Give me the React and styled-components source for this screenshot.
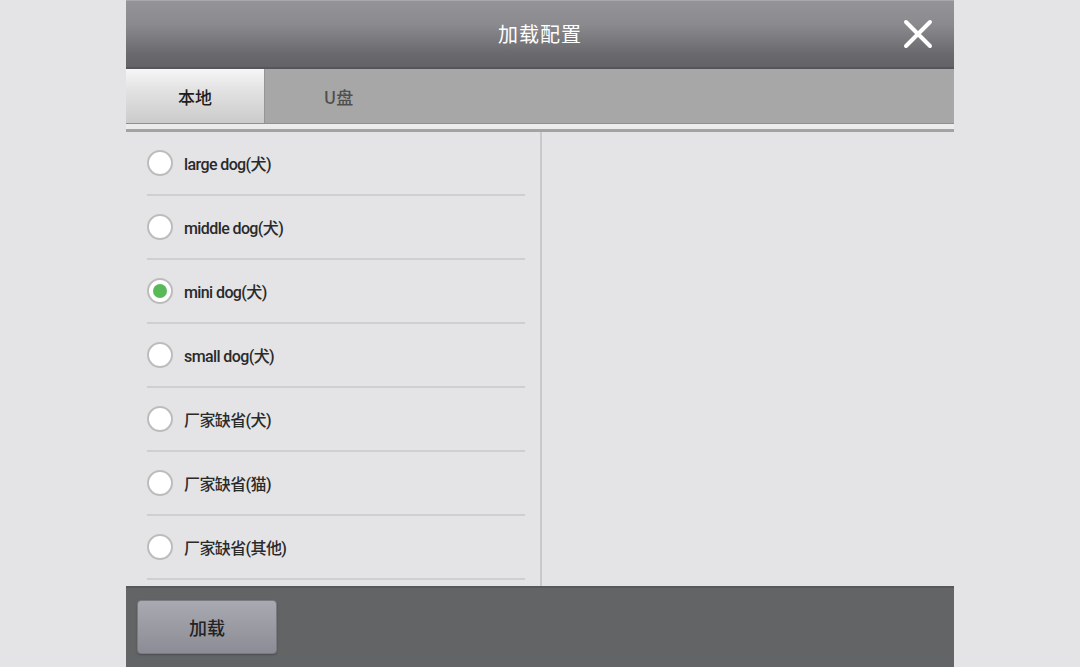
import React, { useState } from 'react';
import styled, { createGlobalStyle } from 'styled-components';

const GlobalStyle = createGlobalStyle`
  body {
    margin: 0;
    background: #e4e4e6;
    font-family: Roboto, "Noto Sans CJK SC", sans-serif;
  }
`;

const items = [
  'large dog(犬)',
  'middle dog(犬)',
  'mini dog(犬)',
  'small dog(犬)',
  '厂家缺省(犬)',
  '厂家缺省(猫)',
  '厂家缺省(其他)',
];

const App = () => {
  const [tab, setTab] = useState(0);
  const [selected, setSelected] = useState(2);

  return (
    <>
      <GlobalStyle />
      <Page>
        <Dialog>
          <Header>
            <span />
            <Title>加载配置</Title>
            <CloseBtn>
              <svg width="30" height="30" viewBox="0 0 30 30">
                <path
                  d="M3 3 L27 27 M27 3 L3 27"
                  stroke="#fff"
                  strokeWidth="4"
                  strokeLinecap="round"
                />
              </svg>
            </CloseBtn>
          </Header>
          <TabBar>
            {['本地', 'U盘'].map((t, idx) => (
              <Tab key={t} active={tab === idx} onClick={() => setTab(idx)}>
                {t}
              </Tab>
            ))}
          </TabBar>
          <TabRule />
          <Body>
            <List>
              {items.map((name, idx) => (
                <Row key={name} onClick={() => setSelected(idx)}>
                  <Radio checked={selected === idx} />
                  <Label>{name}</Label>
                </Row>
              ))}
            </List>
            <Preview />
          </Body>
          <Footer>
            <LoadBtn>加载</LoadBtn>
          </Footer>
        </Dialog>
      </Page>
    </>
  );
};

const Page = styled.div`
  display: flex;
  justify-content: center;
  height: 667px;
  overflow: hidden;
`;

const Dialog = styled.div`
  width: 828px;
  height: 667px;
  display: flex;
  flex-direction: column;
  background: #e4e4e6;
`;

const Header = styled.div`
  height: 69px;
  flex-shrink: 0;
  box-sizing: border-box;
  display: grid;
  grid-template-columns: 1fr auto 1fr;
  align-items: center;
  background: linear-gradient(#939398, #8a8a8f 35%, #6a6a6e 80%, #636367);
  border-top: 1px solid #a9a9ad;
  border-bottom: 2px solid #56565a;
`;

const Title = styled.div`
  color: #fff;
  font-size: 20px;
  letter-spacing: 1px;
  font-family: "Noto Sans CJK SC", sans-serif;
  padding-bottom: 2px;
`;

const CloseBtn = styled.div`
  justify-self: end;
  margin-right: 21px;
  display: flex;
  align-items: center;
  padding-bottom: 1px;
`;

const TabBar = styled.div`
  height: 54px;
  flex-shrink: 0;
  display: flex;
  background: #a7a7a7;
  border-bottom: 1px solid #8f8f8f;
`;

const Tab = styled.div`
  width: 139px;
  display: flex;
  align-items: center;
  justify-content: center;
  padding-left: ${(p) => (p.active ? '0' : '8px')};
  font-size: 17px;
  font-weight: 500;
  font-family: "Noto Sans CJK SC", sans-serif;
  color: ${(p) => (p.active ? '#1e1e1e' : '#505050')};
  background: ${(p) =>
    p.active ? 'linear-gradient(#f6f6f6, #e2e2e2 40%, #cbcbcb)' : 'transparent'};
  border-right: ${(p) => (p.active ? '1px solid #959595' : 'none')};
  box-sizing: border-box;
  cursor: pointer;
`;

const TabRule = styled.div`
  height: 5px;
  flex-shrink: 0;
  background: #ececec;
  border-bottom: 3px solid #a3a3a3;
`;

const Body = styled.div`
  flex: 1;
  display: flex;
  min-height: 0;
`;

const List = styled.div`
  width: 416px;
  padding: 0 15px 0 21px;
  box-sizing: border-box;
  border-right: 2px solid #c9c9cd;
`;

const Row = styled.div`
  height: 62px;
  display: flex;
  align-items: center;
  gap: 11px;
  border-bottom: 2px solid #cfcfd3;
  cursor: pointer;
`;

const Radio = styled.div`
  width: 26px;
  height: 26px;
  border-radius: 50%;
  box-sizing: border-box;
  border: 2px solid #bcbcbc;
  background: #fff;
  display: flex;
  align-items: center;
  justify-content: center;

  &::after {
    content: '';
    width: 14px;
    height: 14px;
    border-radius: 50%;
    background: #57b957;
    display: ${(p) => (p.checked ? 'block' : 'none')};
  }
`;

const Label = styled.span`
  font-size: 16px;
  font-weight: 500;
  color: #2a2a2a;
  letter-spacing: -0.6px;
`;

const Preview = styled.div`
  flex: 1;
`;

const Footer = styled.div`
  height: 81px;
  flex-shrink: 0;
  background: #636466;
  border-top: 2px solid #58585a;
  box-sizing: border-box;
  display: flex;
  align-items: flex-start;
  padding: 12px 11px;
`;

const LoadBtn = styled.button`
  width: 140px;
  height: 54px;
  border-radius: 4px;
  border: 1px solid #7a7a82;
  background: linear-gradient(#a9a9b1, #8c8c96);
  font-family: "Noto Sans CJK SC", sans-serif;
  font-size: 18px;
  font-weight: 500;
  color: #232323;
  box-shadow: 0 1px 2px rgba(0, 0, 0, 0.25);
  cursor: pointer;
`;

export default App;
